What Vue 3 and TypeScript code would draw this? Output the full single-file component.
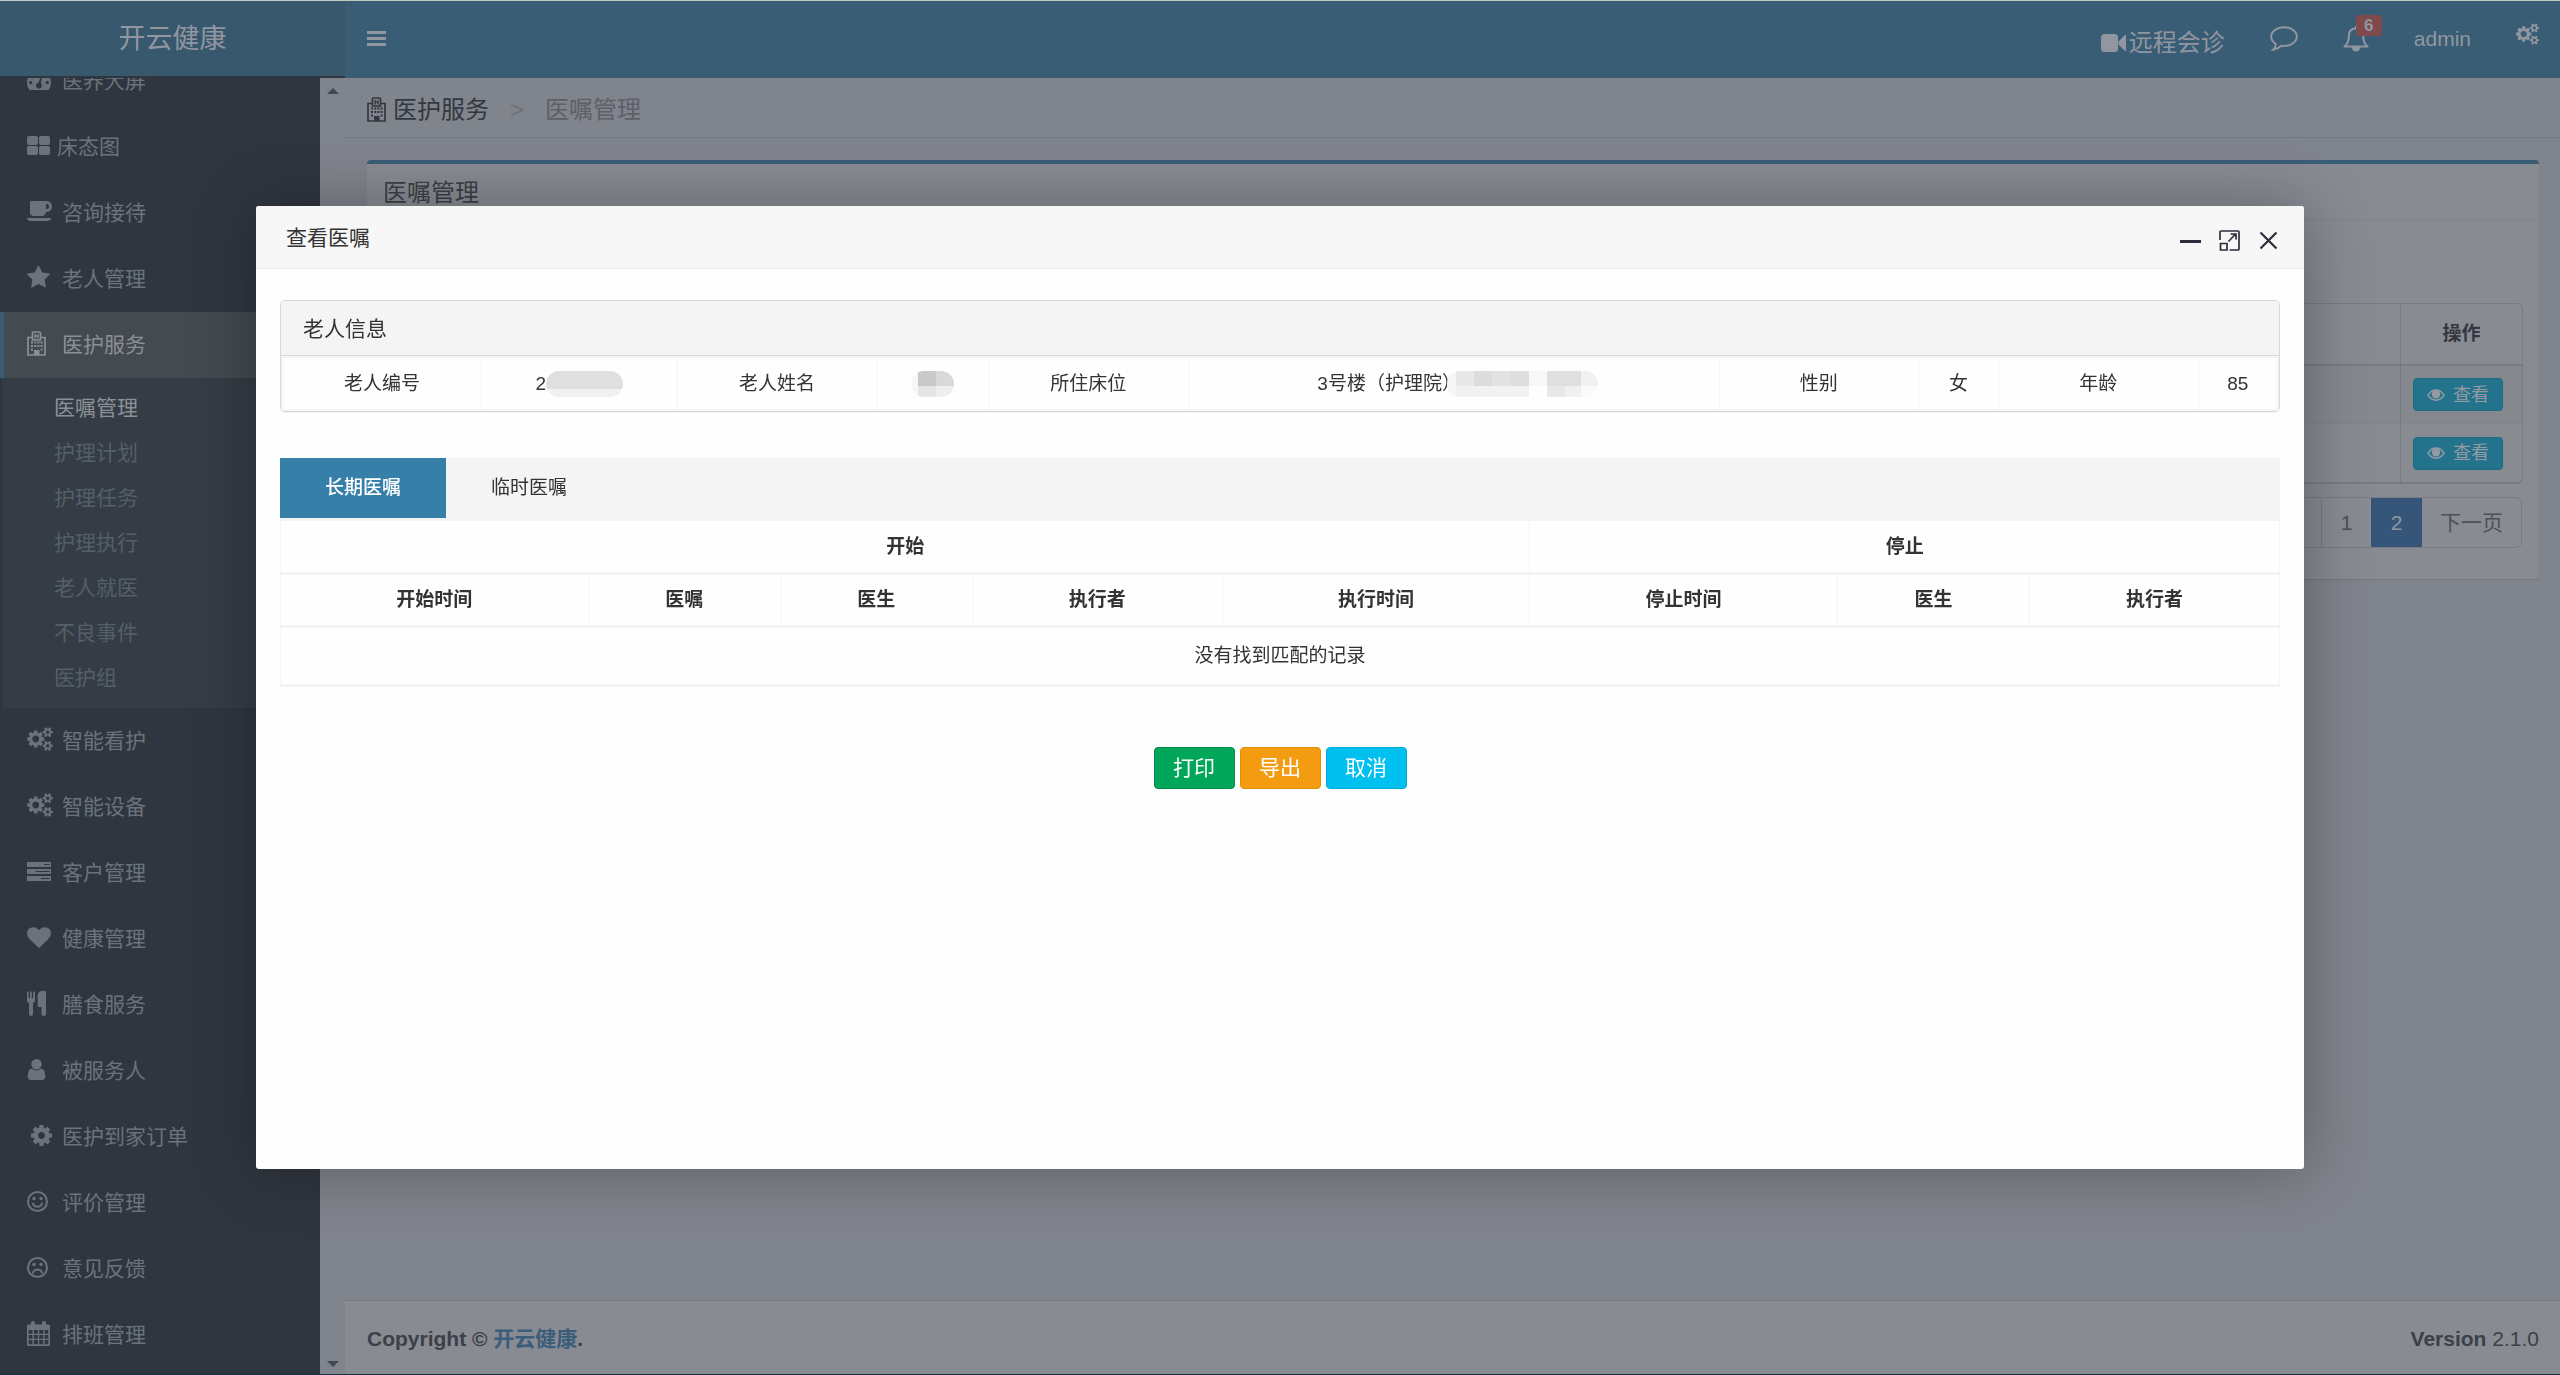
<script setup lang="ts">
import { computed, ref } from 'vue'

interface Glyph {
  w: number
  h: number
  box: string
  art: string
}

interface MenuItem {
  icon: string
  label: string
  tight?: boolean
  inset?: boolean
  children?: string[]
}

const COG =
  'M1152 896q0-106-75-181t-181-75-181 75-75 181 75 181 181 75 181-75 75-181zm512-109v222q0 12-8 23t-20 13l-185 28q-19 54-39 91 35 50 107 138 10 12 10 25t-9 23q-27 37-99 108t-94 71q-12 0-26-9l-138-108q-44 23-91 38-16 136-29 186-7 28-36 28h-222q-14 0-24.5-8.5t-11.5-21.5l-28-184q-49-16-90-37l-141 107q-10 9-25 9-14 0-25-11-126-114-165-168-7-10-7-23 0-12 8-23 15-21 51-66.5t54-70.5q-27-50-41-99l-183-27q-13-2-21-12.5t-8-23.5v-222q0-12 8-23t19-13l186-28q14-46 39-92-40-57-107-138-10-12-10-24 0-10 9-23 26-36 98.5-107.5t94.5-71.5q13 0 26 10l138 107q44-23 91-38 16-136 29-186 7-28 36-28h222q14 0 24.5 8.5t11.5 21.5l28 184q49 16 90 37l142-107q9-9 24-9 13 0 25 10 129 119 165 170 7 8 7 22 0 12-8 23-15 21-51 66.5t-54 70.5q26 50 41 98l183 28q13 2 21 12.5t8 23.5z'
const COGS =
  'M896 896q0-106-75-181t-181-75-181 75-75 181 75 181 181 75 181-75 75-181zm768 512q0-52-38-90t-90-38-90 38-38 90q0 53 37.5 90.5t90.5 37.5 90.5-37.5 37.5-90.5zm0-1024q0-52-38-90t-90-38-90 38-38 90q0 53 37.5 90.5t90.5 37.5 90.5-37.5 37.5-90.5zm-384 421v185q0 10-7 19.5t-16 10.5l-155 24q-11 35-32 76 34 48 90 115 7 11 7 20 0 12-7 19-23 30-82.5 89.5t-78.5 59.5q-11 0-21-7l-115-90q-37 19-77 31-11 108-23 155-7 24-30 24h-186q-11 0-20-7.5t-10-17.5l-23-153q-34-10-75-31l-118 89q-7 7-20 7-11 0-21-8-144-133-144-160 0-9 7-19 10-14 41-53t47-61q-23-44-35-82l-152-24q-10-1-17-9.5t-7-19.5v-185q0-10 7-19.5t16-10.5l155-24q11-35 32-76-34-48-90-115-7-11-7-20 0-12 7-20 22-30 82-89t79-59q11 0 21 7l115 90q34-18 77-32 11-108 23-154 7-24 30-24h186q11 0 20 7.5t10 17.5l23 153q34 10 75 31l118-89q8-7 20-7 11 0 21 8 144 133 144 160 0 8-7 19-12 16-42 54t-45 60q23 48 34 82l152 23q10 2 17 10.5t7 19.5zm640 533v140q0 16-149 31-12 27-30 52 51 113 51 138 0 4-4 7-122 71-124 71-8 0-46-47t-52-68q-20 2-30 2t-30-2q-14 21-52 68t-46 47q-2 0-124-71-4-3-4-7 0-25 51-138-18-25-30-52-149-15-149-31v-140q0-16 149-31 13-29 30-52-51-113-51-138 0-4 4-7 4-2 35-20t59-34 30-16q8 0 46 46.5t52 67.5q20-2 30-2t30 2q51-71 92-112l6-2q4 0 124 70 4 3 4 7 0 25-51 138 17 23 30 52 149 15 149 31zm0-1024v140q0 16-149 31-12 27-30 52 51 113 51 138 0 4-4 7-122 71-124 71-8 0-46-47t-52-68q-20 2-30 2t-30-2q-14 21-52 68t-46 47q-2 0-124-71-4-3-4-7 0-25 51-138-18-25-30-52-149-15-149-31v-140q0-16 149-31 13-29 30-52-51-113-51-138 0-4 4-7 4-2 35-20t59-34 30-16q8 0 46 46.5t52 67.5q20-2 30-2t30 2q51-71 92-112l6-2q4 0 124 70 4 3 4 7 0 25-51 138 17 23 30 52 149 15 149 31z'
const STAR =
  'M1728 647q0 22-26 48l-363 354 86 500q1 7 1 20 0 21-10.5 35.5t-30.5 14.5q-19 0-40-12l-449-236-449 236q-22 12-40 12-21 0-31.5-14.5t-10.5-35.5q0-6 2-20l86-500-364-354q-25-27-25-48 0-37 56-46l502-73 225-455q19-41 49-41t49 41l225 455 502 73q56 9 56 46z'
const HEART =
  'M896 1664q-26 0-44-18l-624-602q-10-8-27.5-26t-55.5-65.5-68-97.5-53.5-121-23.5-138q0-220 127-344t351-124q62 0 126.5 21.5t120 58 95.5 68.5 76 68q36-36 76-68t95.5-68.5 120-58 126.5-21.5q224 0 351 124t127 344q0 221-229 450l-623 600q-18 18-44 18z'
const USER =
  'M1536 1399q0 109-62.5 187t-150.5 78h-854q-88 0-150.5-78t-62.5-187q0-85 8.5-160.5t31.5-152 58.5-131 94-89 134.5-34.5q131 128 313 128t313-128q76 0 134.5 34.5t94 89 58.5 131 31.5 152 8.5 160.5zm-256-887q0 159-112.5 271.5t-271.5 112.5-271.5-112.5-112.5-271.5 112.5-271.5 271.5-112.5 271.5 112.5 112.5 271.5z'

const face = (mouth: string): string =>
  `<circle cx="10.5" cy="10.5" r="9.5" fill="none" stroke="currentColor" stroke-width="2"/><circle cx="7" cy="7.5" r="1.7"/><circle cx="14" cy="7.5" r="1.7"/><path d="${mouth}" fill="none" stroke="currentColor" stroke-width="2" stroke-linecap="round"/>`

const glyphs: Record<string, Glyph> = {
  gauge: {
    w: 24, h: 21, box: '0 0 24 21',
    art: '<path fill-rule="evenodd" d="M2.500 21A12 12 0 1 1 21.500 21zM12 3a1.600 1.600 0 1 0 .1 0zM5.500 6a1.600 1.600 0 1 0 .1 0zM18.500 6a1.600 1.600 0 1 0 .1 0zM3.600 12a1.600 1.600 0 1 0 .1 0zM20.300 12a1.600 1.600 0 1 0 .1 0zM13.500 7l-1.700 6.600a3 3 0 1 0 2 .6l1.500-6.800z"/>',
  },
  grid: {
    w: 23, h: 19, box: '0 0 23 19',
    art: '<rect width="11" height="9" rx="2"/><rect x="12" width="11" height="9" rx="2"/><rect y="10" width="11" height="9" rx="2"/><rect x="12" y="10" width="11" height="9" rx="2"/>',
  },
  coffee: {
    w: 25, h: 20, box: '0 0 25 20',
    art: '<path fill-rule="evenodd" d="M3 1q0-1 1-1h15.500a5.500 5.500 0 0 1 0 11H19q-.5 4-4 4H7q-4 0-4-4zM19 3v5h.5a2.500 2.500 0 0 0 0-5z"/><path d="M0 17h24q0 3-4 3H4q-4 0-4-3z"/>',
  },
  star: { w: 23, h: 22, box: '64 64 1664 1600', art: `<path d="${STAR}"/>` },
  hospital: {
    w: 19, h: 25, box: '0 0 19 25',
    art: '<path d="M5.500 6.500H1v17.500h17V6.500h-4.500M5.500 9V2q0-1 1-1h6q1 0 1 1v7z" fill="none" stroke="currentColor" stroke-width="1.700"/><path d="M7.500 3h1.300v1.500h1.500V3h1.300v4.500h-1.300V5.800H8.800v1.700H7.500zM4 10.500h2v2H4zM7.200 10.500h2v2h-2zM10.400 10.500h2v2h-2zM13.600 10.500h2v2h-2zM4 14h2v2H4zM7.200 14h2v2h-2zM10.400 14h2v2h-2zM13.600 14h2v2h-2zM4 17.500h2v2H4zM13.600 17.500h2v2h-2zM7 19h5.500v5H7z"/>',
  },
  cogs: { w: 26, h: 24, box: '0 0 1920 1792', art: `<path d="${COGS}"/>` },
  server: {
    w: 24, h: 19, box: '0 0 24 19',
    art: '<path fill-rule="evenodd" d="M0 0h24v5H0zM17 2v1h5.500V2zM0 7h24v5H0zM8.500 9v1h14V9zM0 14h24v5H0zM14 16v1h8.500v-1z"/>',
  },
  heart: { w: 24, h: 21, box: '0 128 1792 1536', art: `<path d="${HEART}"/>` },
  cutlery: {
    w: 19, h: 25, box: '0 0 19 25',
    art: '<path d="M0 1q.8-1.600 1.600 0v6h1.400V1q.8-1.600 1.800 0v6h1.400V1q.9-1.600 1.800 0v8q0 2.200-2 3.200V23q0 2-2 2t-2-2V12.200q-2-1-2-3.200zM15.500 0H18q1 0 1 1v22q0 2-2.200 2t-2.300-2v-7h-3q-.8 0-.8-.8V5q0-5 4.800-5z"/>',
  },
  user: { w: 19, h: 21, box: '256 128 1280 1536', art: `<path d="${USER}"/>` },
  cog: { w: 21, h: 21, box: '128 128 1536 1536', art: `<path d="${COG}"/>` },
  smile: { w: 21, h: 21, box: '0 0 21 21', art: face('M6 12.500q1 3.200 4.500 3.200t4.500-3.200') },
  frown: { w: 21, h: 21, box: '0 0 21 21', art: face('M6 15.700q1-3.200 4.500-3.200t4.500 3.200') },
  calendar: {
    w: 23, h: 25, box: '0 0 23 25',
    art: '<path fill-rule="evenodd" d="M1.500 3.500H4V2q0-2 2-2t2 2v1.500h7V2q0-2 2-2t2 2v1.500h2.500q1.500 0 1.500 1.500v18.500q0 1.500-1.500 1.500h-20Q0 25 0 23.500V5q0-1.500 1.500-1.500zM1.700 9v3.800h3.700V9zM6.900 9v3.800h4V9zM12.200 9v3.800h4V9zM17.600 9v3.800h3.700V9zM1.700 14v3.800h3.700V14zM6.900 14v3.800h4V14zM12.200 14v3.800h4V14zM17.600 14v3.800h3.700V14zM1.700 19v4.200h3.700V19zM6.900 19v4.200h4V19zM12.200 19v4.200h4V19zM17.600 19v4.200h3.700V19z"/>',
  },
  bars: { w: 19, h: 15, box: '0 0 19 15', art: '<path d="M0 0h19v3H0zM0 6h19v3H0zM0 12h19v3H0z"/>' },
  video: {
    w: 25, h: 18, box: '0 0 25 18',
    art: '<rect width="17" height="18" rx="3.500"/><path d="M17.500 7.500L24 1q1-.5 1 .5v15q0 1-1 .5l-6.500-6.500z"/>',
  },
  comment: {
    w: 28, h: 25, box: '0 0 28 25',
    art: '<path d="M14 1.200c7.200 0 12.800 4.200 12.800 9.400S21.200 20 14 20q-1.500 0-2.800-.2Q8 23 3.200 23.800 5.600 21.200 5.800 18 1.200 15.200 1.200 10.600C1.200 5.400 6.800 1.200 14 1.200z" fill="none" stroke="currentColor" stroke-width="2"/>',
  },
  bell: {
    w: 26, h: 27, box: '0 0 26 27',
    art: '<path d="M1.500 21.500Q6 17.500 6 10q0-6.500 7-6.500T20 10q0 7.500 4.500 11.500z" fill="none" stroke="currentColor" stroke-width="2" stroke-linejoin="round"/><path d="M12 1h2v3h-2zM9 22h8q0 4.500-4 4.500T9 22z"/>',
  },
  eye: {
    w: 18, h: 12, box: '0 0 18 12',
    art: '<path d="M1 6.200Q4 1 9 1t8 5.200Q14 11.200 9 11.200T1 6.200z" fill="none" stroke="currentColor" stroke-width="1.500"/><circle cx="9" cy="5.200" r="4.200"/>',
  },
  minimize: { w: 21, h: 21, box: '0 0 21 21', art: '<path d="M0 10h21v3H0z"/>' },
  maximize: {
    w: 21, h: 21, box: '0 0 21 21',
    art: '<path d="M1 10V2q0-1 1-1h17q1 0 1 1v17q0 1-1 1h-8.500M1.500 13.500h6.500V20H1.500zM9.500 11.500l7-7.500M11.500 4h5.500v5.500" fill="none" stroke="currentColor" stroke-width="1.700"/>',
  },
  close: {
    w: 21, h: 21, box: '0 0 21 21',
    art: '<path d="M2.500 2.500l16 16M18.500 2.500l-16 16" fill="none" stroke="currentColor" stroke-width="2.200"/>',
  },
}

const menu: MenuItem[] = [
  { icon: 'gauge', label: '医养大屏' },
  { icon: 'grid', label: '床态图', tight: true },
  { icon: 'coffee', label: '咨询接待' },
  { icon: 'star', label: '老人管理' },
  {
    icon: 'hospital',
    label: '医护服务',
    children: ['医嘱管理', '护理计划', '护理任务', '护理执行', '老人就医', '不良事件', '医护组'],
  },
  { icon: 'cogs', label: '智能看护' },
  { icon: 'cogs', label: '智能设备' },
  { icon: 'server', label: '客户管理' },
  { icon: 'heart', label: '健康管理' },
  { icon: 'cutlery', label: '膳食服务' },
  { icon: 'user', label: '被服务人' },
  { icon: 'cog', label: '医护到家订单', inset: true },
  { icon: 'smile', label: '评价管理' },
  { icon: 'frown', label: '意见反馈' },
  { icon: 'calendar', label: '排班管理' },
]

const currentPage = '医嘱管理'
const tabs = ['长期医嘱', '临时医嘱']
const activeTab = ref(0)
const startColumns = ['开始时间', '医嘱', '医生', '执行者', '执行时间']
const stopColumns = ['停止时间', '医生', '执行者']
const columns = computed(() => [...startColumns, ...stopColumns])
</script>

<template>
  <div class="app">
    <header class="top">
      <a class="logo" href="#">开云健康</a>
      <nav class="navbar">
        <button class="plain" type="button" aria-label="菜单">
          <svg :width="glyphs.bars.w" :height="glyphs.bars.h" :viewBox="glyphs.bars.box" fill="currentColor" v-html="glyphs.bars.art" />
        </button>
        <div class="nav-right">
          <a class="video" href="#">
            <svg :width="glyphs.video.w" :height="glyphs.video.h" :viewBox="glyphs.video.box" fill="currentColor" v-html="glyphs.video.art" />
            <span>远程会诊</span>
          </a>
          <a href="#" aria-label="消息">
            <svg :width="glyphs.comment.w" :height="glyphs.comment.h" :viewBox="glyphs.comment.box" fill="currentColor" v-html="glyphs.comment.art" />
          </a>
          <a class="bell" href="#" aria-label="通知">
            <svg :width="glyphs.bell.w" :height="glyphs.bell.h" :viewBox="glyphs.bell.box" fill="currentColor" v-html="glyphs.bell.art" />
            <span class="badge">6</span>
          </a>
          <a href="#">admin</a>
          <a class="settings" href="#" aria-label="设置">
            <svg width="23" height="22" :viewBox="glyphs.cogs.box" fill="currentColor" v-html="glyphs.cogs.art" />
          </a>
        </div>
      </nav>
    </header>

    <div class="body">
      <aside class="sidebar">
        <ul class="menu">
          <li v-for="item in menu" :key="item.label">
            <a href="#" class="menu-link" :class="{ open: item.children, tight: item.tight }">
              <span class="menu-icon" :class="{ inset: item.inset }">
                <svg
                  :width="glyphs[item.icon].w"
                  :height="glyphs[item.icon].h"
                  :viewBox="glyphs[item.icon].box"
                  fill="currentColor"
                  v-html="glyphs[item.icon].art"
                />
              </span>
              <span>{{ item.label }}</span>
            </a>
            <ul v-if="item.children" class="submenu">
              <li v-for="child in item.children" :key="child">
                <a href="#" :class="{ current: child === currentPage }">{{ child }}</a>
              </li>
            </ul>
          </li>
        </ul>
      </aside>

      <div class="rail" aria-hidden="true">
        <span class="arrow up"></span>
        <span class="arrow down"></span>
      </div>

      <main class="content">
        <div class="crumbs">
          <svg class="crumb-icon" :width="glyphs.hospital.w" :height="glyphs.hospital.h" :viewBox="glyphs.hospital.box" fill="currentColor" v-html="glyphs.hospital.art" />
          <span class="crumb-root">医护服务</span>
          <span class="crumb-sep">&gt;</span>
          <span>医嘱管理</span>
        </div>

        <section class="box">
          <h3 class="box-title">医嘱管理</h3>
          <div class="box-body">
            <table class="orders">
              <thead>
                <tr>
                  <td></td>
                  <th>操作</th>
                </tr>
              </thead>
              <tbody>
                <tr v-for="row in 2" :key="row">
                  <td></td>
                  <td class="ops">
                    <button class="view" type="button">
                      <svg :width="glyphs.eye.w" :height="glyphs.eye.h" :viewBox="glyphs.eye.box" fill="currentColor" v-html="glyphs.eye.art" />
                      <span>查看</span>
                    </button>
                  </td>
                </tr>
              </tbody>
            </table>
            <div class="pager">
              <button class="prev" type="button" aria-label="上一页"></button>
              <button type="button">1</button>
              <button class="on" type="button">2</button>
              <button class="next" type="button">下一页</button>
            </div>
          </div>
        </section>

        <footer class="footer">
          <strong>Copyright © <a href="#">开云健康</a>.</strong>
          <span><b>Version</b> 2.1.0</span>
        </footer>
      </main>
    </div>

    <section class="dialog" role="dialog" aria-labelledby="dialog-title">
      <header class="dialog-head">
        <h2 id="dialog-title">查看医嘱</h2>
        <div class="dialog-tools">
          <button v-for="tool in ['minimize', 'maximize', 'close']" :key="tool" class="plain" type="button" :aria-label="tool">
            <svg :width="glyphs[tool].w" :height="glyphs[tool].h" :viewBox="glyphs[tool].box" fill="currentColor" v-html="glyphs[tool].art" />
          </button>
        </div>
      </header>

      <div class="dialog-body">
        <section class="panel">
          <h3>老人信息</h3>
          <table class="info">
            <colgroup>
              <col class="c-label" /><col class="c-id" />
              <col class="c-label" /><col class="c-name" />
              <col class="c-label" /><col class="c-bed" />
              <col class="c-label" /><col class="c-short" />
              <col class="c-label" /><col class="c-short" />
            </colgroup>
            <tbody>
              <tr>
                <td>老人编号</td>
                <td><span class="masked">2<i class="mask mask-id"></i></span></td>
                <td>老人姓名</td>
                <td><span class="masked"><i class="mask mask-name"></i></span></td>
                <td>所住床位</td>
                <td><span class="masked">3号楼（护理院）<i class="mask mask-bed"></i></span></td>
                <td>性别</td>
                <td>女</td>
                <td>年龄</td>
                <td>85</td>
              </tr>
            </tbody>
          </table>
        </section>

        <div class="tabs" role="tablist">
          <button
            v-for="(tab, i) in tabs"
            :key="tab"
            type="button"
            role="tab"
            :aria-selected="i === activeTab"
            :class="{ active: i === activeTab }"
            @click="activeTab = i"
          >
            {{ tab }}
          </button>
        </div>
        <table class="records">
          <colgroup>
            <col class="r-time" /><col class="r-doc" /><col class="r-doc" /><col class="r-exec" />
            <col class="r-time" /><col class="r-time" /><col class="r-doc" /><col class="r-exec" />
          </colgroup>
          <thead>
            <tr>
              <th :colspan="startColumns.length">开始</th>
              <th :colspan="stopColumns.length">停止</th>
            </tr>
            <tr>
              <th v-for="(name, i) in columns" :key="i">{{ name }}</th>
            </tr>
          </thead>
          <tbody>
            <tr>
              <td :colspan="columns.length">没有找到匹配的记录</td>
            </tr>
          </tbody>
        </table>

        <div class="actions">
          <button class="print" type="button">打印</button>
          <button class="export" type="button">导出</button>
          <button class="cancel" type="button">取消</button>
        </div>
      </div>
    </section>
  </div>
</template>

<style>
body {
  margin: 0;
  overflow: hidden;
}
</style>

<style scoped>
.app {
  box-sizing: border-box;
  display: flex;
  flex-direction: column;
  height: 100vh;
  border-top: 1px solid #c5c9c4;
  border-bottom: 1px solid #15324a;
  background: #80848c;
  color: #3c4047;
  font-family: "Liberation Sans", "Noto Sans CJK SC", sans-serif;
  font-size: 21px;
  font-weight: 400;
  line-height: 30px;
}
.app *,
.app *::before {
  box-sizing: border-box;
}
a {
  color: inherit;
  text-decoration: none;
}
button {
  font: inherit;
  color: inherit;
  cursor: pointer;
}
svg {
  display: block;
  flex: none;
}
ul,
h2,
h3 {
  margin: 0;
  padding: 0;
  list-style: none;
  font-size: inherit;
  font-weight: inherit;
}
table {
  border-collapse: collapse;
  width: 100%;
}
.plain {
  padding: 0;
  border: 0;
  background: none;
}

/* top bar */
.top {
  display: flex;
  align-items: flex-start;
  flex: none;
  background: #30363f;
  color: #9196a0;
}
.logo {
  width: 345px;
  height: 75px;
  background: #38586e;
  text-align: center;
  font-size: 27px;
  line-height: 76px;
}
.navbar {
  flex: 1;
  display: flex;
  align-items: center;
  justify-content: space-between;
  height: 77px;
  padding: 0 21px 2px 22px;
  background: #3a5d76;
}
.nav-right {
  display: flex;
  align-items: center;
  gap: 45px;
}
.video {
  display: flex;
  align-items: center;
  gap: 3px;
  padding-top: 8px;
  font-size: 24px;
}
.bell {
  position: relative;
}
.badge {
  position: absolute;
  left: 13px;
  top: -10px;
  width: 26px;
  height: 21px;
  border-radius: 3px;
  background: #7f4a4c;
  text-align: center;
  font-size: 17px;
  font-weight: bold;
  line-height: 21px;
}
.settings {
  padding-bottom: 10px;
}

/* side menu */
.body {
  flex: 1;
  display: flex;
  min-height: 0;
}
.sidebar {
  flex: none;
  width: 320px;
  overflow: hidden;
  background: #30363f;
  color: #6a737b;
}
.menu {
  margin-top: -30px;
}
.menu-link {
  display: flex;
  align-items: center;
  gap: 9px;
  height: 66px;
  padding-left: 27px;
}
.menu-link.open {
  padding-left: 23px;
  border-left: 4px solid #3a5d76;
  background: #434a50;
  color: #8b9097;
}
.menu-icon {
  width: 26px;
  padding-bottom: 4px;
}
.menu-icon.inset {
  padding-left: 4px;
}
.tight {
  gap: 4px;
}
.submenu {
  height: 330px;
  margin-left: 2px;
  padding: 7px 0 0 52px;
  background: #353c45;
  color: #53606a;
}
.submenu a {
  display: block;
  line-height: 45px;
}
.submenu .current {
  color: #8b9097;
}
.rail {
  flex: none;
  display: flex;
  flex-direction: column;
  justify-content: space-between;
  width: 25px;
  padding: 10px 7px 7px;
}
.arrow {
  border: 6px solid transparent;
  border-top-width: 0;
  border-bottom: 6px solid #43474f;
  width: 12px;
}
.arrow.down {
  border-bottom-width: 0;
  border-top: 6px solid #43474f;
}

/* page */
.content {
  flex: 1;
  display: flex;
  flex-direction: column;
  min-width: 0;
}
.crumbs {
  display: flex;
  align-items: center;
  height: 60px;
  padding: 4px 22px 0;
  border-bottom: 1px solid #747a84;
  color: #5c6068;
  font-size: 24px;
}
.crumb-root {
  margin-left: 7px;
  color: #33373f;
}
.crumb-sep {
  margin: 0 21px;
  color: #6d727a;
}
.crumb-icon {
  color: #33373f;
}
.box {
  margin: 22px 21px 0 22px;
  border-top: 4px solid #3a5d76;
  border-radius: 4px;
  background: #888b92;
  box-shadow: 0 1px 1px #737780;
}
.box-title {
  height: 56px;
  padding: 0 16px;
  border-bottom: 1px solid #80848b;
  font-size: 24px;
  line-height: 58px;
}
.box-body {
  padding: 83px 16px 31px;
}
.orders {
  border-collapse: separate;
  border-spacing: 0;
  border: 1px solid #777b83;
  border-bottom-width: 2px;
  border-radius: 6px;
  font-size: 19px;
}
.orders th,
.orders td {
  height: 58px;
  padding: 0;
}
.orders thead th,
.orders thead td {
  height: 62px;
  border-bottom: 2px solid #777b83;
}
.orders tr > :last-child {
  width: 122px;
  border-left: 1px solid #777b83;
}
.orders th {
  font-weight: bold;
  color: #33373f;
}
.orders tbody tr:first-child td {
  border-bottom: 1px solid #80848b;
  background: #85888f;
}
.orders .ops {
  padding-left: 12px;
}
.view {
  display: flex;
  align-items: center;
  justify-content: center;
  gap: 8px;
  width: 90px;
  height: 33px;
  padding: 0;
  border: 1px solid #206a84;
  border-radius: 4px;
  background: #23738c;
  color: #959aa2;
  font-size: 18px;
  line-height: 24px;
}
.pager {
  display: flex;
  width: max-content;
  margin: 13px 1px 0 auto;
  border: 1px solid #777b83;
  border-radius: 6px;
  color: #4b5058;
}
.pager button {
  width: 49px;
  height: 49px;
  padding: 0;
  border: 0;
  background: none;
}
.pager .prev {
  width: 99px;
  border-right: 1px solid #777b83;
}
.pager .on {
  width: 51px;
  background: #355678;
  color: #9196a0;
}
.pager .next {
  width: 99px;
}
.footer {
  display: flex;
  justify-content: space-between;
  align-items: center;
  height: 74px;
  margin-top: auto;
  padding: 2px 21px 0 22px;
  border-top: 1px solid #737985;
  background: #888b92;
}
.footer strong,
.footer b {
  font-weight: bold;
}
.footer a {
  color: #3a5d7a;
}

/* dialog */
.dialog {
  position: fixed;
  left: 10vw;
  top: 15vh;
  width: 80vw;
  height: 70vh;
  border-radius: 3px;
  background: #fefefe;
  box-shadow: 1px 1px 67px rgba(0, 0, 0, 0.3);
  color: #333;
}
.dialog-head {
  display: flex;
  justify-content: space-between;
  align-items: center;
  height: 63px;
  padding: 2px 25px 0 30px;
  border-bottom: 1px solid #eee;
  border-radius: 3px 3px 0 0;
  background: #f7f7f7;
}
.dialog-tools {
  display: flex;
  gap: 18px;
  padding-top: 4px;
  color: #2e2d3c;
}
.dialog-body {
  padding: 31px 24px 0;
  font-size: 19px;
}
.panel {
  border: 1px solid #d9d9d9;
  border-radius: 5px;
  box-shadow: 0 1px 1px rgba(0, 0, 0, 0.05);
}
.panel h3 {
  height: 55px;
  padding-left: 22px;
  border-bottom: 1px solid #d9d9d9;
  border-radius: 5px 5px 0 0;
  background: #f4f4f4;
  font-size: 21px;
  line-height: 56px;
}
.info {
  table-layout: fixed;
  border: 2px solid #f4f4f4;
}
.info td {
  height: 53px;
  padding: 0;
  border: 1px solid #f4f4f4;
  text-align: center;
}
.c-label {
  width: 10%;
}
.c-id {
  width: 9.8%;
}
.c-name {
  width: 5.6%;
}
.c-bed {
  width: 26.6%;
}
.c-short {
  width: 4%;
}
.masked {
  display: flex;
  align-items: center;
  justify-content: center;
}
.mask {
  flex: none;
  height: 26px;
  border-radius: 13px;
}
.mask-id {
  width: 77px;
  background: linear-gradient(#dfdfdf 70%, #f1f1f1 70%);
}
.mask-name {
  width: 43px;
  background:
    linear-gradient(90deg, #f7f7f7 16%, #c9c9c9 16% 58%, #d9d9d9 58%) 0 0 / 100% 58% no-repeat,
    linear-gradient(90deg, #f7f7f7 16%, #e5e5e5 16% 58%, #efefef 58%) 0 100% / 100% 42% no-repeat;
}
.mask-bed {
  width: 151px;
  margin: 0 -8px 0 -14px;
  background:
    linear-gradient(90deg, #f5f5f5 6%, #e8e8e8 6% 18%, #dcdcdc 18% 30%, #e2e2e2 30% 42%, #dedede 42% 54%, #f8f8f8 54% 66%, #dfdfdf 66% 89%, #f1f1f1 89%) 0 0 / 100% 58% no-repeat,
    linear-gradient(90deg, #f5f5f5 6%, #f2f2f2 6% 54%, #fefefe 54% 66%, #e8e8e8 66% 78%, #f0f0f0 78% 89%, #fafafa 89%) 0 100% / 100% 42% no-repeat;
}
.tabs {
  display: flex;
  height: 62px;
  margin-top: 46px;
  background: #f4f4f4;
}
.tabs button {
  height: 60px;
  padding: 0 45px;
  border: 0;
  background: none;
}
.tabs .active {
  background: #367fa9;
  color: #fff;
  font-weight: 500;
}
.records {
  table-layout: fixed;
  border: 1px solid #f4f4f4;
  border-bottom-width: 3px;
  text-align: center;
}
.records th {
  height: 53px;
  padding: 0;
  border: 1px solid #f4f4f4;
  border-bottom-width: 3px;
  font-weight: bold;
}
.records td {
  height: 59px;
  padding: 0;
}
.r-time {
  width: 16%;
}
.r-doc {
  width: 10%;
}
.r-exec {
  width: 13%;
}
.actions {
  display: flex;
  justify-content: center;
  gap: 5px;
  margin-top: 60px;
}
.actions button {
  width: 81px;
  height: 42px;
  padding: 0;
  border: 1px solid #008d4c;
  border-radius: 4px;
  background: #00a65a;
  color: #fff;
  font-size: 21px;
}
.actions .export {
  border-color: #e08e0b;
  background: #f39c12;
}
.actions .cancel {
  border-color: #00acd6;
  background: #00c0ef;
}
</style>
